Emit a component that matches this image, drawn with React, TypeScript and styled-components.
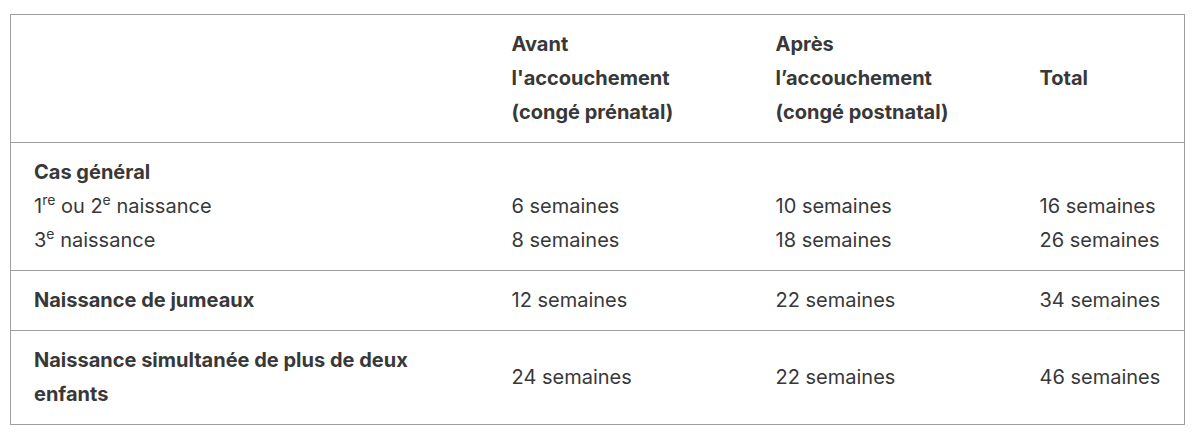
import React from 'react'
import styled, { createGlobalStyle } from 'styled-components'

const Global = createGlobalStyle`
  body {
    margin: 0;
    background: #fff;
    font-family: Inter, "Liberation Sans", sans-serif;
    color: #383838;
  }
`

type Row = {
  label: React.ReactNode
  before: string
  after: string
  total: string
  alignBottom?: boolean
}

const rows: Row[] = [
  {
    label: (
      <>
        <strong>Cas général</strong>
        <br />1<sup>re</sup> ou 2<sup>e</sup> naissance
        <br />3<sup>e</sup> naissance
      </>
    ),
    before: '6 semaines\n8 semaines',
    after: '10 semaines\n18 semaines',
    total: '16 semaines\n26 semaines',
    alignBottom: true,
  },
  {
    label: <strong>Naissance de jumeaux</strong>,
    before: '12 semaines',
    after: '22 semaines',
    total: '34 semaines',
  },
  {
    label: (
      <strong>
        Naissance simultanée de plus de deux
        <br />
        enfants
      </strong>
    ),
    before: '24 semaines',
    after: '22 semaines',
    total: '46 semaines',
  },
]

export default function App() {
  return (
    <>
      <Global />
      <Page>
        <Table>
          <colgroup>
            <col style={{ width: 478 }} />
            <col style={{ width: 264 }} />
            <col style={{ width: 264 }} />
            <col style={{ width: 168 }} />
          </colgroup>
          <thead>
            <tr>
              <Th />
              <Th>
                Avant
                <br />
                l'accouchement
                <br />
                (congé prénatal)
              </Th>
              <Th>
                Après
                <br />
                l’accouchement
                <br />
                (congé postnatal)
              </Th>
              <Th>Total</Th>
            </tr>
          </thead>
          <tbody>
            {rows.map((r, i) => (
              <tr key={i}>
                <Td>{r.label}</Td>
                {[r.before, r.after, r.total].map((v, j) => (
                  <Td key={j} $bottom={r.alignBottom}>
                    {v.split('\n').map((line, k) => (
                      <Line key={k}>{line}</Line>
                    ))}
                  </Td>
                ))}
              </tr>
            ))}
          </tbody>
        </Table>
      </Page>
    </>
  )
}

const Page = styled.div`
  padding: 14px 16px 16px 10px;
`
const Table = styled.table`
  width: 1174px;
  table-layout: fixed;
  border-collapse: collapse;
  border: 1px solid #9e9e9e;
  font-size: 20px;
  line-height: 34px;
`
const Th = styled.th`
  text-align: left;
  vertical-align: middle;
  font-weight: 700;
  padding: 12px 23px 13px;
  border-bottom: 1px solid #9e9e9e;
`
const Td = styled.td<{ $bottom?: boolean }>`
  text-align: left;
  vertical-align: ${(p) => (p.$bottom ? 'bottom' : 'middle')};
  padding: 12px 23px 13px;
  border-bottom: 1px solid #9e9e9e;

  strong {
    font-weight: 700;
  }
  sup {
    font-size: 14px;
    line-height: 0;
    vertical-align: 8px;
  }
`
const Line = styled.div`
  white-space: nowrap;
`
